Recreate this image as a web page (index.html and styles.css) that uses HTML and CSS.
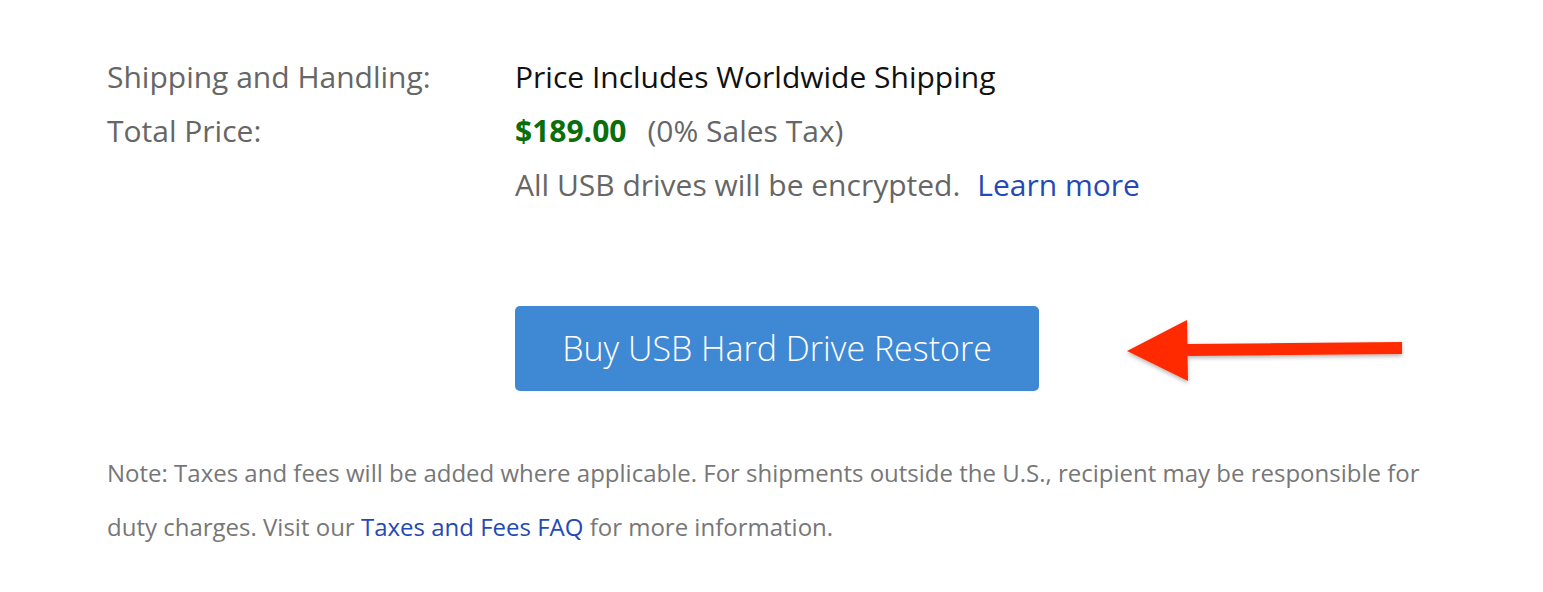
FILE: index.html
```html
<!DOCTYPE html>
<html lang="en">
<head>
<meta charset="utf-8">
<title>Buy USB Hard Drive Restore</title>
<link rel="stylesheet" href="styles.css">
</head>
<body>
<div class="page">
  <div class="details">
    <div class="row">
      <div class="label">Shipping and Handling:</div>
      <div class="value dark">Price Includes Worldwide Shipping</div>
    </div>
    <div class="row">
      <div class="label">Total Price:</div>
      <div class="value"><span class="price">$189.00</span><span class="tax">(0% Sales Tax)</span></div>
    </div>
    <div class="row">
      <div class="label"></div>
      <div class="value">All USB drives will be encrypted.<a class="link learn" href="#">Learn more</a></div>
    </div>
  </div>
  <div class="action">
    <button class="buy">Buy USB Hard Drive Restore</button>
    <svg class="arrow" width="290" height="80" viewBox="0 0 290 80">
      <defs>
        <filter id="sh" x="-10%" y="-20%" width="120%" height="150%">
          <feDropShadow dx="0" dy="2" stdDeviation="2" flood-color="#000" flood-opacity="0.3"/>
        </filter>
      </defs>
      <g filter="url(#sh)" fill="#ff2a00">
        <polygon points="7,40 67,9 68,70"/>
        <polygon points="64,33 282,31 282,43 64,45"/>
      </g>
    </svg>
  </div>
  <p class="note">Note: Taxes and fees will be added where applicable. For shipments outside the U.S., recipient may be responsible for duty charges. Visit our <a class="link" href="#">Taxes and Fees FAQ</a> for more information.</p>
</div>
</body>
</html>
```
FILE: styles.css
```css
html, body {
  margin: 0;
  padding: 0;
  background: #ffffff;
}
body {
  font-family: "Open Sans", "Liberation Sans", sans-serif;
  color: #666666;
}
.page {
  padding: 50px 0 0 107px;
  width: 1330px;
}
.details {
  display: flex;
  flex-direction: column;
}
.row {
  display: flex;
  font-size: 30px;
  line-height: 54px;
}
.label {
  width: 408px;
  flex: none;
}
.value {
  color: #666666;
}
.value.dark {
  color: #111111;
}
.price {
  color: #0a6e0a;
  font-weight: 700;
  margin-right: 21px;
}
.link {
  color: #2449b5;
  text-decoration: none;
}
.learn {
  margin-left: 17px;
}
.action {
  display: flex;
  align-items: center;
  margin: 93px 0 0 408px;
}
.buy {
  width: 524px;
  height: 85px;
  background: #3f88d4;
  border: none;
  border-radius: 5px;
  color: #ffffff;
  font-family: "Open Sans", "Liberation Sans", sans-serif;
  font-weight: 300;
  font-size: 34px;
  padding: 0;
}
.arrow {
  margin-left: 81px;
  margin-top: 6px;
}
.note {
  margin: 55px 0 0 0;
  font-size: 24px;
  line-height: 54px;
  color: #777777;
  width: 1330px;
}
```
